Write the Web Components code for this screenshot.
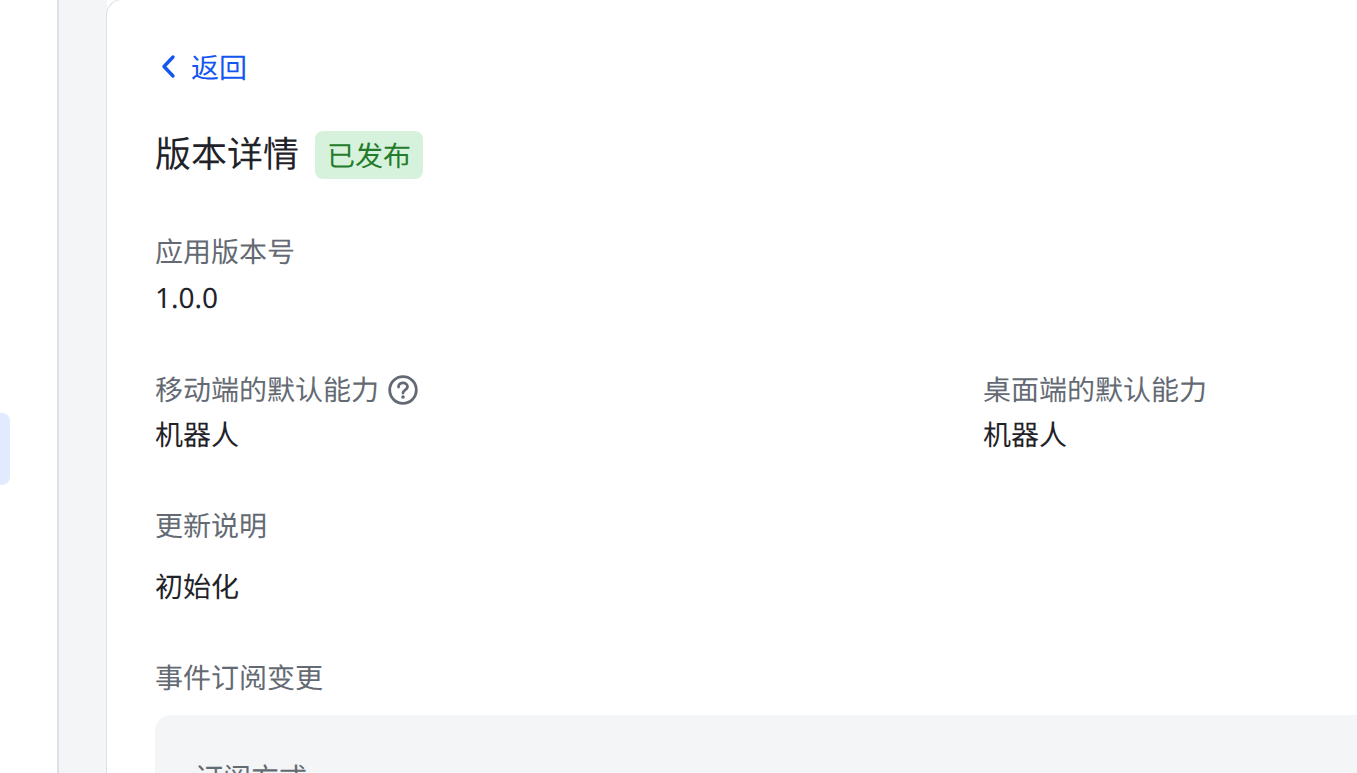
<!DOCTYPE html>
<html><head><meta charset="utf-8">
<style>
html,body{margin:0;padding:0;width:1357px;height:773px;overflow:hidden;background:#fff;font-family:"Noto Sans","Noto Sans CJK SC",sans-serif;text-rendering:geometricPrecision}
</style></head><body>
<template id="t-shell"><style>
:host{display:flex;height:773px;width:1357px;overflow:hidden}
.side{flex:none;width:57px;box-sizing:border-box;padding-top:413px;background:#fff}
.ind{width:10px;height:72px;background:#e1eaff;border-radius:0 8px 8px 0}
.rail{flex:none;width:50px;box-sizing:border-box;background:#f4f5f7;border-left:2px solid #dee0e3;margin-right:-1px}
.main{flex:none;width:1400px;min-width:0;box-sizing:border-box;background:#fff;border:1px solid #dee0e3;border-right:0;border-bottom:0;border-radius:16px 0 0 0;margin-top:-1px;padding:49px 48px 0 48px;overflow:hidden;height:900px}
</style><div class="side"><div class="ind"></div></div><div class="rail"></div><div class="main"><slot></slot></div></template>

<template id="t-back"><style>
:host{display:flex;align-items:center;height:36px;gap:12px;color:#1456f0;font-size:28px;line-height:36px;margin-left:4px}
svg{display:block;flex:none}
span{position:relative;top:1px}
</style><svg width="20" height="28" viewBox="0 0 20 28"><path d="M14 4 L5 13.500 L14 23" fill="none" stroke="#1456f0" stroke-width="3.400" stroke-linecap="round" stroke-linejoin="round"/></svg><span><slot></slot></span></template>

<template id="t-title"><style>
:host{display:flex;align-items:center;gap:16px;margin-top:46px;height:48px}
h1{margin:0 0 2px;font-weight:400;font-size:36px;line-height:46px;color:#1f2329}
</style><h1><slot></slot></h1><slot name="tag"></slot></template>

<template id="t-tag"><style>
:host{display:inline-block;height:48px;line-height:50px;padding:0 12px;border-radius:8px;background:#d7f2dc;color:#237b2b;font-size:28px}
</style><slot></slot></template>

<template id="t-field"><style>
:host{display:block;min-width:0}
.l{display:flex;align-items:center;gap:9px;color:#646a73;font-size:28px;line-height:40px;height:40px}
.v{color:#1f2329;font-size:28px;line-height:40px;margin-top:var(--gap,4px)}
svg{display:block;flex:none}
</style><div class="l"><slot name="label"></slot><slot name="icon"></slot></div><div class="v"><slot></slot></div></template>

<template id="t-row"><style>
:host{display:grid;grid-template-columns:828px 1fr}
</style><slot></slot></template>

<template id="t-box"><style>
:host{display:block;background:#f4f5f7;border-radius:16px 0 0 0;padding:43px 40px 40px;color:#646a73;font-size:28px;line-height:40px}
</style><slot></slot></template>

<app-shell>
  <back-link>返回</back-link>
  <page-title>版本详情<status-tag slot="tag">已发布</status-tag></page-title>
  <info-field style="margin-top:53px;--gap:6px"><span slot="label">应用版本号</span>1.0.0</info-field>
  <field-row style="margin-top:52px">
    <info-field style="--gap:5px"><span slot="label">移动端的默认能力</span><svg slot="icon" width="30" height="30" viewBox="0 0 30 30"><circle cx="15" cy="15" r="13.300" fill="none" stroke="#646a73" stroke-width="2.800"/><path d="M10.500 12 C10.500 9.300 12.700 7.800 15 7.800 C17.500 7.800 19.500 9.500 19.500 11.800 C19.500 14.700 15 15 15 18" fill="none" stroke="#646a73" stroke-width="2.800" stroke-linecap="round"/><circle cx="15" cy="22" r="1.800" fill="#646a73"/></svg>机器人</info-field>
    <info-field style="--gap:5px"><span slot="label">桌面端的默认能力</span>机器人</info-field>
  </field-row>
  <info-field style="margin-top:51px;--gap:21px"><span slot="label">更新说明</span>初始化</info-field>
  <info-field style="margin-top:51px;--gap:0;height:57px"><span slot="label">事件订阅变更</span></info-field>
  <sub-box>订阅方式</sub-box>
</app-shell>

<script>
function def(name,tid){customElements.define(name,class extends HTMLElement{constructor(){super();this.attachShadow({mode:'open'}).appendChild(document.getElementById(tid).content.cloneNode(true));}});}
def('app-shell','t-shell');def('back-link','t-back');def('page-title','t-title');def('status-tag','t-tag');def('info-field','t-field');def('field-row','t-row');def('sub-box','t-box');
</script>
</body></html>
